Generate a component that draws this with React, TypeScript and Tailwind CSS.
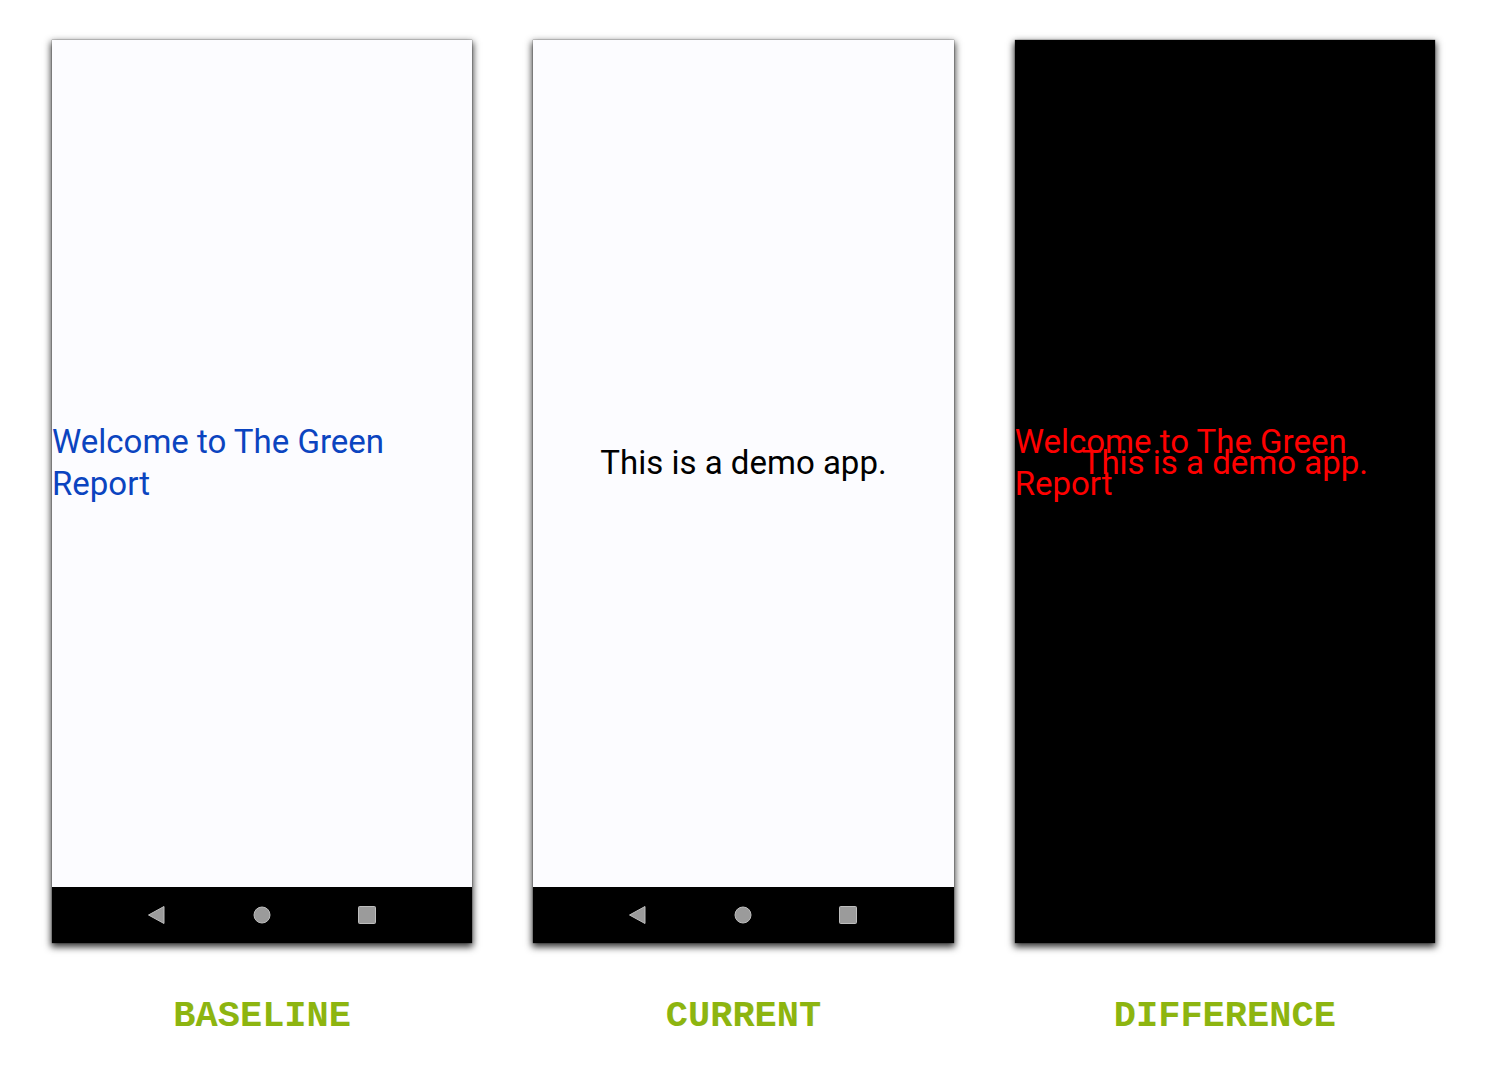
import React from "react";

const shot =
  "flex aspect-[420/902] w-full flex-col shadow-[0_0_1px_rgba(0,0,0,0.8),0_3px_7px_1px_rgba(0,0,0,0.8)]";
const message = "font-['Roboto',sans-serif] text-[33px] leading-[42px]";

function NavBar() {
  return (
    <nav aria-label="System navigation" className="flex h-14 items-center justify-center gap-[81px] bg-black">
      <button type="button" aria-label="Back" className="size-6">
        <svg viewBox="0 0 24 24" className="size-6">
          <path d="M3.5 12 L19 3.5 V20.5 Z" fill="#9b9b9b" stroke="#bdbdbd" strokeWidth="1" strokeLinejoin="round" />
        </svg>
      </button>
      <button type="button" aria-label="Home" className="size-6">
        <svg viewBox="0 0 24 24" className="size-6">
          <circle cx="12" cy="12" r="8" fill="#9b9b9b" stroke="#bdbdbd" />
        </svg>
      </button>
      <button type="button" aria-label="Recent apps" className="size-6">
        <svg viewBox="0 0 24 24" className="size-6">
          <rect x="3.5" y="3.5" width="17" height="17" rx="1" fill="#9b9b9b" stroke="#bdbdbd" />
        </svg>
      </button>
    </nav>
  );
}

function Caption({ children }: { children: React.ReactNode }) {
  return (
    <figcaption className="mt-[51px] text-center font-['Courier_New','Liberation_Mono',monospace] text-[37px] leading-[44px] font-bold text-[#8db510]">
      {children}
    </figcaption>
  );
}

export default function App() {
  return (
    <main className="grid min-h-screen grid-cols-3 content-start gap-[61px] bg-white px-[52px] pt-10">
      <figure>
        <div className={`${shot} bg-[#fcfcff]`}>
          <div className="flex flex-1 items-center">
            <p className={`${message} text-[#0b44c0]`}>Welcome to The Green Report</p>
          </div>
          <NavBar />
        </div>
        <Caption>BASELINE</Caption>
      </figure>
      <figure>
        <div className={`${shot} bg-[#fcfcff]`}>
          <div className="flex flex-1 items-center justify-center">
            <p className={`${message} text-black`}>This is a demo app.</p>
          </div>
          <NavBar />
        </div>
        <Caption>CURRENT</Caption>
      </figure>
      <figure>
        <div className={`${shot} bg-black pb-14`}>
          <div className="grid flex-1 items-center text-[#ff0000]">
            <p className={`${message} col-start-1 row-start-1`}>Welcome to The Green Report</p>
            <p className={`${message} col-start-1 row-start-1 text-center`}>This is a demo app.</p>
          </div>
        </div>
        <Caption>DIFFERENCE</Caption>
      </figure>
    </main>
  );
}
